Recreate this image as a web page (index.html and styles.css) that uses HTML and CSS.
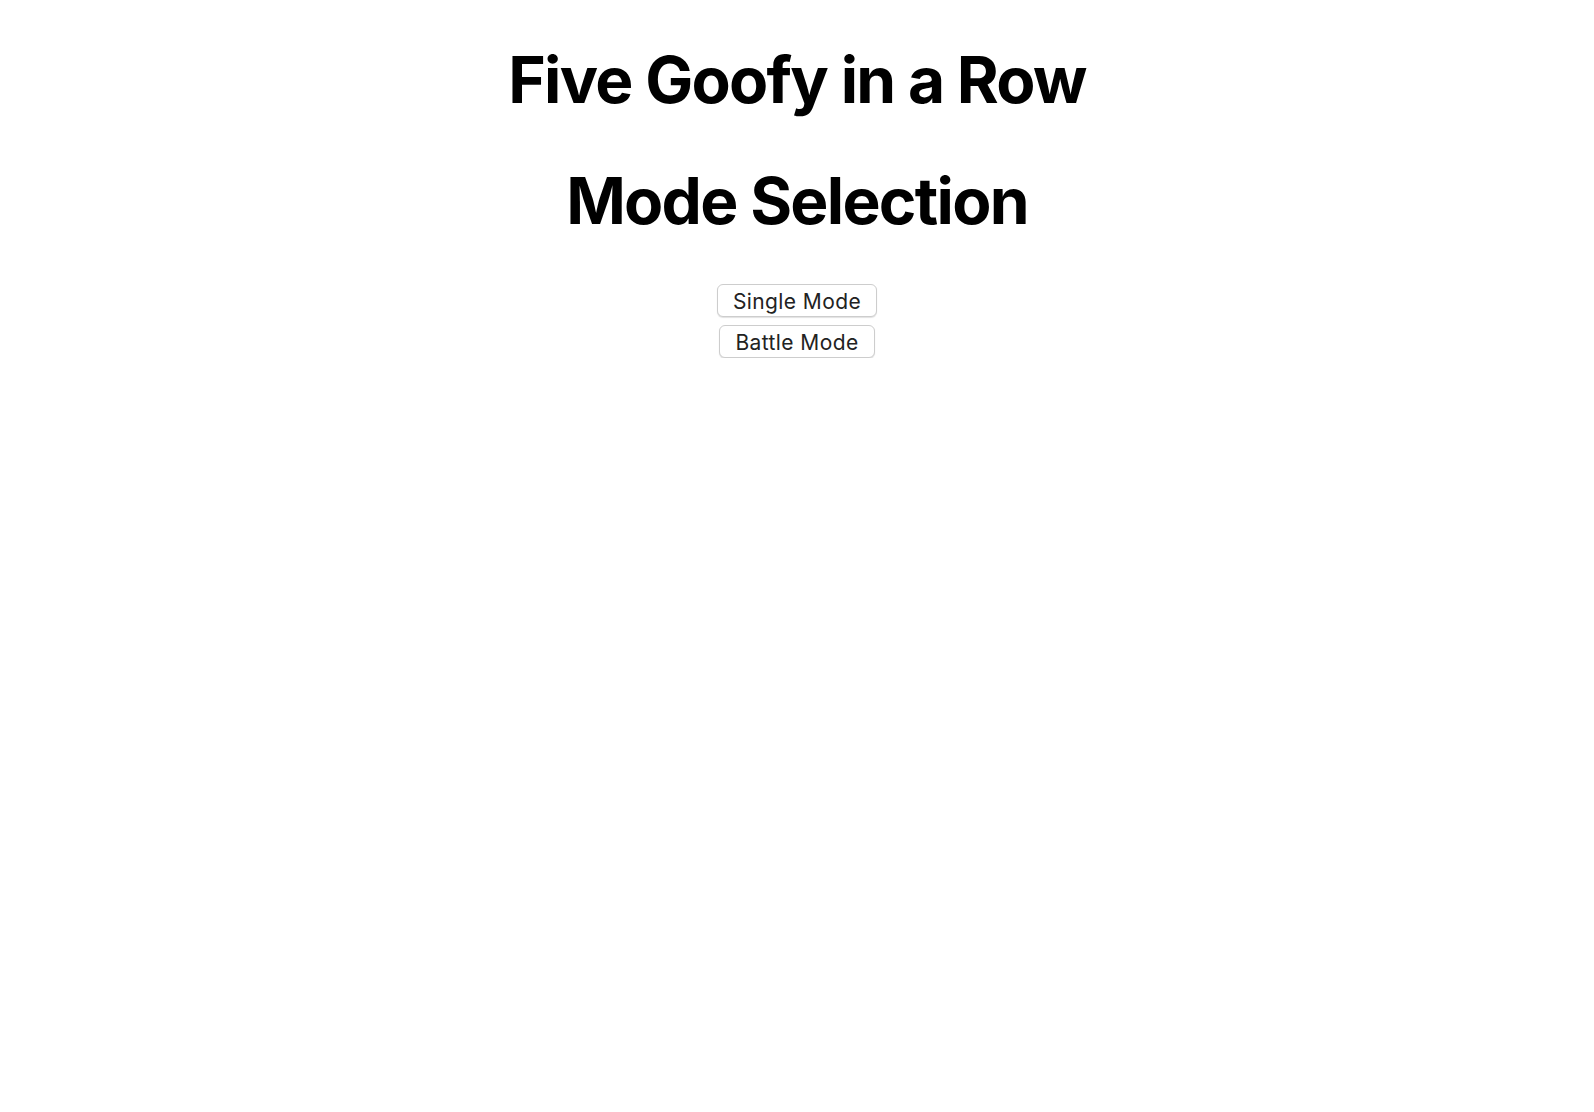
FILE: index.html
```html
<!DOCTYPE html>
<html lang="en">
<head>
<meta charset="utf-8">
<title>Five Goofy in a Row</title>
<link rel="stylesheet" href="styles.css">
</head>
<body>
<main class="page">
  <h1 class="title">Five Goofy in a Row</h1>
  <h1 class="title">Mode Selection</h1>
  <div class="modes">
    <button class="mode-btn" type="button">Single Mode</button>
    <button class="mode-btn" type="button">Battle Mode</button>
  </div>
</main>
</body>
</html>
```

FILE: styles.css
```css
html, body {
  background: #ffffff;
}
body {
  margin: 8px;
  font-family: Inter, "Liberation Sans", sans-serif;
  color: #000;
}
.page {
  text-align: center;
}
.title {
  font-family: Inter, "Liberation Sans", sans-serif;
  font-size: 64px;
  font-weight: 700;
  letter-spacing: -1.7px;
  line-height: 77px;
  margin: 33px 0 44px;
}
.title + .title {
  margin-bottom: 45px;
}
.modes {
  display: flex;
  flex-direction: column;
  align-items: center;
  gap: 8px;
}
.mode-btn {
  font-family: Inter, "Liberation Sans", sans-serif;
  font-size: 21px;
  letter-spacing: 0.4px;
  color: #222;
  background: #fff;
  border: 1px solid #cdcdcd;
  border-radius: 6px;
  box-shadow: 0 1px 1px rgba(0,0,0,0.12);
  padding: 5px 15px 3px;
  line-height: 23px;
  cursor: pointer;
}
```
